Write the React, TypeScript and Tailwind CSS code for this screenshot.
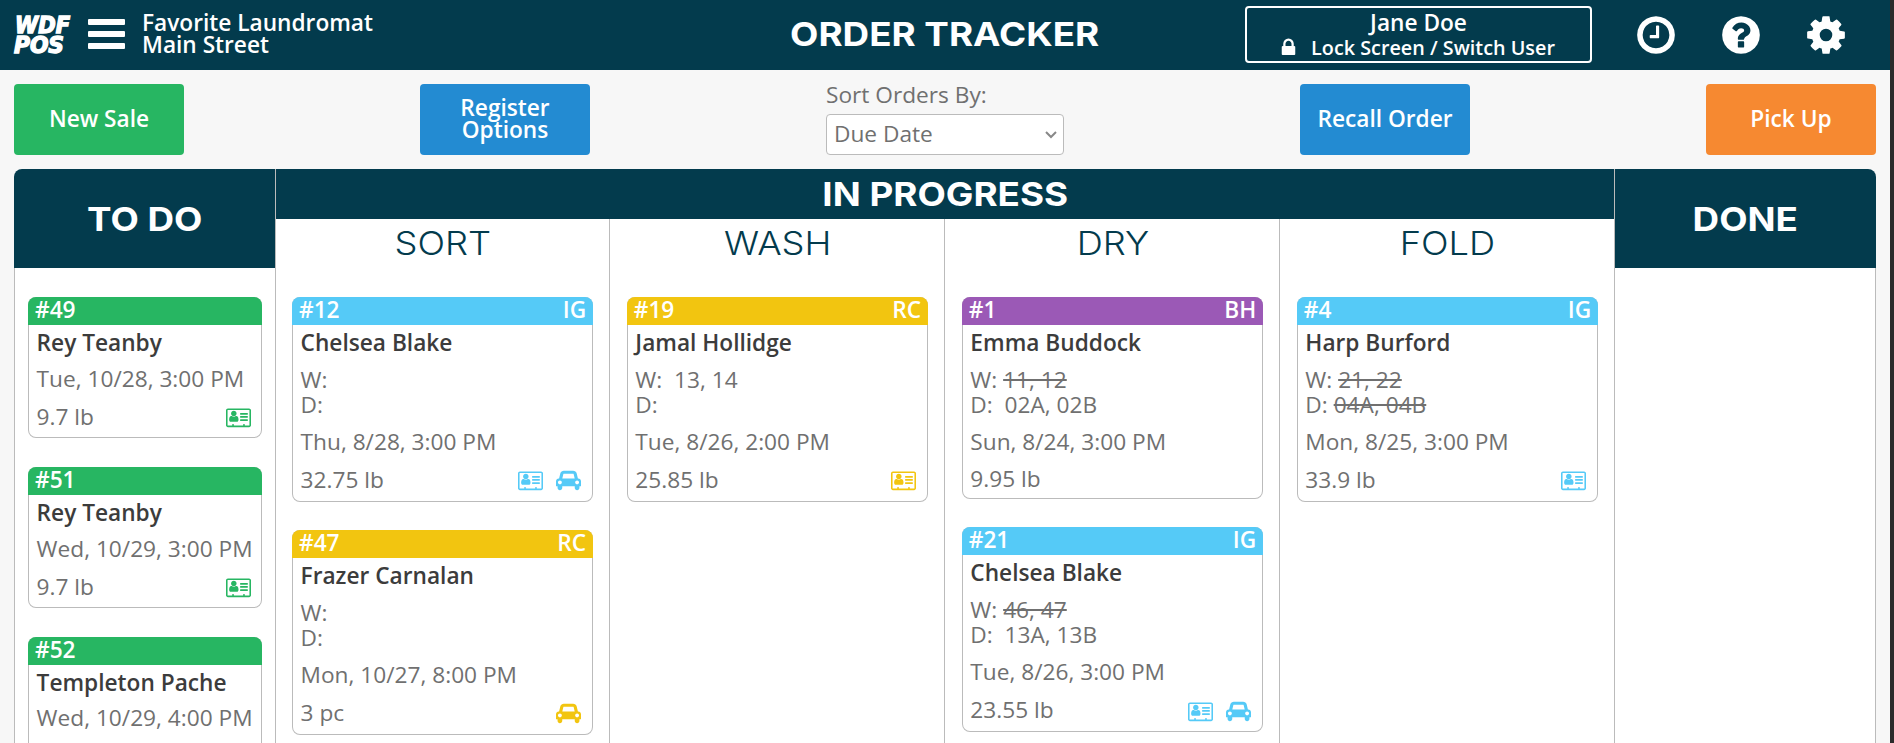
import type { ReactNode } from "react";

type Tone = "green" | "sky" | "yellow" | "purple";

type Order = {
  id: number;
  name: string;
  tone: Tone;
  initials?: string;
  machines?: boolean;
  washers?: string;
  washed?: boolean;
  dryers?: string;
  dried?: boolean;
  due: string;
  amount?: string;
  contact?: boolean;
  delivery?: boolean;
};

const headerTone: Record<Tone, string> = {
  green: "bg-[#27b662]",
  sky: "bg-[#55caf7]",
  yellow: "bg-[#f2c510]",
  purple: "bg-[#9b59b6]",
};

const iconTone: Record<Tone, string> = {
  green: "text-[#27b662]",
  sky: "text-[#55caf7]",
  yellow: "text-[#f2c510]",
  purple: "text-[#9b59b6]",
};

const todo: Order[] = [
  { id: 49, name: "Rey Teanby", tone: "green", due: "Tue, 10/28, 3:00 PM", amount: "9.7 lb", contact: true },
  { id: 51, name: "Rey Teanby", tone: "green", due: "Wed, 10/29, 3:00 PM", amount: "9.7 lb", contact: true },
  { id: 52, name: "Templeton Pache", tone: "green", due: "Wed, 10/29, 4:00 PM" },
];

const stages: { title: string; orders: Order[] }[] = [
  {
    title: "SORT",
    orders: [
      { id: 12, name: "Chelsea Blake", tone: "sky", initials: "IG", machines: true, due: "Thu, 8/28, 3:00 PM", amount: "32.75 lb", contact: true, delivery: true },
      { id: 47, name: "Frazer Carnalan", tone: "yellow", initials: "RC", machines: true, due: "Mon, 10/27, 8:00 PM", amount: "3 pc", delivery: true },
    ],
  },
  {
    title: "WASH",
    orders: [
      { id: 19, name: "Jamal Hollidge", tone: "yellow", initials: "RC", machines: true, washers: "13, 14", due: "Tue, 8/26, 2:00 PM", amount: "25.85 lb", contact: true },
    ],
  },
  {
    title: "DRY",
    orders: [
      { id: 1, name: "Emma Buddock", tone: "purple", initials: "BH", machines: true, washers: "11, 12", washed: true, dryers: "02A, 02B", due: "Sun, 8/24, 3:00 PM", amount: "9.95 lb" },
      { id: 21, name: "Chelsea Blake", tone: "sky", initials: "IG", machines: true, washers: "46, 47", washed: true, dryers: "13A, 13B", due: "Tue, 8/26, 3:00 PM", amount: "23.55 lb", contact: true, delivery: true },
    ],
  },
  {
    title: "FOLD",
    orders: [
      { id: 4, name: "Harp Burford", tone: "sky", initials: "IG", machines: true, washers: "21, 22", washed: true, dryers: "04A, 04B", dried: true, due: "Mon, 8/25, 3:00 PM", amount: "33.9 lb", contact: true },
    ],
  },
];

function Icon({ d, wide, className }: { d: string; wide?: boolean; className: string }) {
  return (
    <svg viewBox={wide ? "0 0 2048 1792" : "0 0 1792 1792"} fill="currentColor" className={className} aria-hidden="true">
      <path d={d} />
    </svg>
  );
}

const clockPath =
  "M1024 544v448q0 14-9 23t-23 9h-320q-14 0-23-9t-9-23v-64q0-14 9-23t23-9h224v-352q0-14 9-23t23-9h64q14 0 23 9t9 23zm416 352q0-148-73-273t-198-198-273-73-273 73-198 198-73 273 73 273 198 198 273 73 273-73 198-198 73-273zm224 0q0 209-103 385.5t-279.5 279.5-385.5 103-385.5-103-279.5-279.5-103-385.5 103-385.5 279.5-279.5 385.5-103 385.5 103 279.5 279.5 103 385.5z";
const helpPath =
  "M1024 1376v-192q0-14-9-23t-23-9h-192q-14 0-23 9t-9 23v192q0 14 9 23t23 9h192q14 0 23-9t9-23zm256-672q0-88-55.5-163t-138.5-116-170-41q-243 0-371 213-15 24 8 42l132 100q7 6 19 6 16 0 25-12 53-68 86-92 34-24 86-24 48 0 85.5 26t37.5 59q0 38-20 61t-68 45q-63 28-115.5 86.5t-52.5 125.5v36q0 14 9 23t23 9h192q14 0 23-9t9-23q0-19 21.5-49.5t54.5-49.5q32-18 49-28.5t46-35 44.5-48 28-60.5 12.5-81zm384 192q0 209-103 385.5t-279.5 279.5-385.5 103-385.5-103-279.5-279.5-103-385.5 103-385.5 279.5-279.5 385.5-103 385.5 103 279.5 279.5 103 385.5z";
const cogPath =
  "M1152 896q0-106-75-181t-181-75-181 75-75 181 75 181 181 75 181-75 75-181zm512-109v222q0 12-8 23t-20 13l-185 28q-19 54-39 91 35 50 107 138 10 12 10 25t-9 23q-27 37-99 108t-94 71q-12 0-26-9l-138-108q-44 23-91 38-16 136-29 186-7 28-36 28h-222q-14 0-24.5-8.5t-11.5-21.5l-28-184q-49-16-90-37l-141 107q-10 9-25 9-14 0-25-11-126-114-165-168-7-10-7-23 0-12 8-23 15-21 51-66.5t54-70.5q-27-50-41-99l-183-27q-13-2-21-12.5t-8-23.5v-222q0-12 8-23t19-13l186-28q14-46 39-92-40-57-107-138-10-12-10-24 0-10 9-23 26-36 98.5-107.5t94.5-71.5q13 0 26 10l138 107q44-23 91-38 16-136 29-186 7-28 36-28h222q14 0 24.5 8.5t11.5 21.5l28 184q49 16 90 37l142-107q9-9 24-9 13 0 25 10 129 119 165 170 7 8 7 22 0 12-8 23-15 21-51 66.5t-54 70.5q26 50 41 98l183 28q13 2 21 12.5t8 23.5z";
const lockPath =
  "M640 768h512v-192q0-106-75-181t-181-75-181 75-75 181v192zm832 96v576q0 40-28 68t-68 28h-960q-40 0-68-28t-28-68v-576q0-40 28-68t68-28h32v-192q0-184 132-316t316-132 316 132 132 316v192h32q40 0 68 28t28 68z";
const carPath =
  "M480 1088q0-66-47-113t-113-47-113 47-47 113 47 113 113 47 113-47 47-113zm36-320h1016l-89-357q-2-8-14-17.5t-21-9.5h-768q-9 0-21 9.5t-14 17.5zm1372 320q0-66-47-113t-113-47-113 47-47 113 47 113 113 47 113-47 47-113zm160-96v384q0 14-9 23t-23 9h-96v128q0 80-56 136t-136 56-136-56-56-136v-128h-1024v128q0 80-56 136t-136 56-136-56-56-136v-128h-96q-14 0-23-9t-9-23v-384q0-93 65.5-158.5t158.5-65.5h28l105-419q23-94 104-157.5t179-63.5h768q98 0 179 63.5t104 157.5l105 419h28q93 0 158.5 65.5t65.5 158.5z";
const cardPath =
  "M1024 1131q0 64-37 106.5t-91 42.5h-512q-54 0-91-42.5t-37-106.5 9-117.5 29.5-103 60.5-78 97-28.5q6 4 30 18t37.5 21.5 35.5 17.5 43 14.5 42 4.5 42-4.5 43-14.5 35.5-17.5 37.5-21.5 30-18q57 0 97 28.5t60.5 78 29.5 103 9 117.5zm-157-520q0 94-66.5 160.5t-160.5 66.5-160.5-66.5-66.5-160.5 66.5-160.5 160.5-66.5 160.5 66.5 66.5 160.5zm925 509v64q0 14-9 23t-23 9h-576q-14 0-23-9t-9-23v-64q0-14 9-23t23-9h576q14 0 23 9t9 23zm0-260v56q0 15-10.5 25.5t-25.5 10.5h-568q-15 0-25.5-10.5t-10.5-25.5v-56q0-15 10.5-25.5t25.5-10.5h568q15 0 25.5 10.5t10.5 25.5zm0-252v64q0 14-9 23t-23 9h-576q-14 0-23-9t-9-23v-64q0-14 9-23t23-9h576q14 0 23 9t9 23zm128 960v-1216q0-13-9.5-22.5t-22.5-9.5h-1728q-13 0-22.5 9.5t-9.5 22.5v1216q0 13 9.5 22.5t22.5 9.5h352v-96q0-14 9-23t23-9h64q14 0 23 9t9 23v96h768v-96q0-14 9-23t23-9h64q14 0 23 9t9 23v96h352q13 0 22.5-9.5t9.5-22.5zm128-1216v1216q0 66-47 113t-113 47h-1728q-66 0-113-47t-47-113v-1216q0-66 47-113t113-47h1728q66 0 113 47t47 113z";

function Logo() {
  return (
    <svg viewBox="0 0 58 38" className="h-[38px] w-[58px] overflow-visible" fill="#fff" stroke="#fff" strokeWidth="1.3">
      <g fontFamily="'DejaVu Sans Condensed', 'DejaVu Sans', sans-serif" fontWeight="700" fontStyle="italic" fontSize="22.5">
        <text x="1" y="17" textLength="55" lengthAdjust="spacingAndGlyphs">WDF</text>
        <text x="0" y="37" textLength="50" lengthAdjust="spacingAndGlyphs">POS</text>
      </g>
    </svg>
  );
}

function Heading({ className, children }: { className: string; children: ReactNode }) {
  return (
    <h2 className={`flex shrink-0 items-center justify-center bg-[#033b4d] pt-[2px] font-['Inter',sans-serif] text-[33px] font-bold text-white ${className}`}>
      <span className="scale-x-[1.115]">{children}</span>
    </h2>
  );
}

function Machines({ label, value, done }: { label: string; value?: string; done?: boolean }) {
  return (
    <div className="h-[25.3px] whitespace-pre leading-[25.3px]">
      {label}: {done ? <span className="line-through">{value}</span> : value && ` ${value}`}
    </div>
  );
}

function OrderCard({ order }: { order: Order }) {
  const hasIcons = order.contact || order.delivery;
  return (
    <div className="shrink-0 overflow-hidden rounded-lg bg-[#bbb] p-px pt-0">
      <div className={`-mx-px flex h-7 justify-between px-[7px] text-white font-semibold leading-[25px] ${headerTone[order.tone]}`}>
        <span>#{order.id}</span>
        <span>{order.initials}</span>
      </div>
      <div className="rounded-b-[7px] bg-white pt-[5px] pb-[7.4px] pl-[7.6px] text-[#707070] leading-[25px]">
        <div className="font-semibold text-[#3c3c3c]">{order.name}</div>
        {order.machines && (
          <div className="mt-[11.6px] mb-[11.8px]">
            <Machines label="W" value={order.washers} done={order.washed} />
            <Machines label="D" value={order.dryers} done={order.dried} />
          </div>
        )}
        <div className={order.machines ? "whitespace-nowrap" : "mt-[10.8px] whitespace-nowrap"}>{order.due}</div>
        <div className={`mt-[11.7px] flex items-center justify-between ${order.machines ? "pr-[11px]" : "pr-[10px]"} ${hasIcons ? "h-[27.5px]" : "h-[25px]"}`}>
          <span>{order.amount}</span>
          {hasIcons && (
            <span className={`flex items-center gap-[13px] pt-[2px] ${iconTone[order.tone]}`}>
              {order.contact && <Icon d={cardPath} wide className="h-[22px] w-[25px]" />}
              {order.delivery && <Icon d={carPath} wide className="h-[22px] w-[25px]" />}
            </span>
          )}
        </div>
      </div>
    </div>
  );
}

function ActionButton({ className, children }: { className: string; children: ReactNode }) {
  return (
    <button className={`flex h-[71px] w-[170px] items-center justify-center rounded pb-[2px] text-center font-semibold leading-[22px] text-white ${className}`}>
      {children}
    </button>
  );
}

export default function App() {
  return (
    <div className="h-[743px] w-full overflow-hidden bg-[#2b2b2b] pr-1 font-['Open_Sans',sans-serif] text-[22.68px]">
      <div className="flex h-full flex-col bg-[#f7f7f7]">
        <header className="grid h-[70px] shrink-0 grid-cols-[1fr_auto_1fr] items-center bg-[#033b4d] text-white">
          <div className="flex items-center pl-[14px]">
            <Logo />
            <div className="ml-[16px] flex w-[37px] flex-col gap-[6px] pb-[2px]">
              <div className="h-[6px] rounded-[1px] bg-white" />
              <div className="h-[6px] rounded-[1px] bg-white" />
              <div className="h-[6px] rounded-[1px] bg-white" />
            </div>
            <div className="ml-[17px] pb-[3px] font-semibold leading-[22px]">
              Favorite Laundromat
              <br />
              Main Street
            </div>
          </div>
          <h1 className="scale-x-[1.115] font-['Inter',sans-serif] text-[33px] font-bold">ORDER TRACKER</h1>
          <div className="flex items-center justify-end pr-[42px] pb-[1px]">
            <div className="mr-[42px] flex h-[57px] w-[347px] flex-col items-center justify-center rounded-[4px] border-2 border-white pb-[1px] font-semibold">
              <div className="leading-[26px]">Jane Doe</div>
              <div className="flex items-center pr-[4px] text-[19.8px] leading-[23px]">
                <Icon d={lockPath} className="mr-[12px] h-[21px] w-[21px]" />
                Lock Screen / Switch User
              </div>
            </div>
            <div className="flex gap-[41px]">
              <Icon d={clockPath} className="size-[44px]" />
              <Icon d={helpPath} className="size-[44px]" />
              <Icon d={cogPath} className="size-[44px]" />
            </div>
          </div>
        </header>

        <div className="flex h-[99px] shrink-0 items-center justify-between px-[14px]">
          <ActionButton className="bg-[#27b662]">New Sale</ActionButton>
          <ActionButton className="bg-[#238bd2]">
            Register
            <br />
            Options
          </ActionButton>
          <div className="flex h-[71px] w-[238px] flex-col justify-between text-[#707070]">
            <div className="leading-[21px]">Sort Orders By:</div>
            <div className="flex h-[41px] items-center justify-between rounded-[4px] border border-[#bbb] bg-white pr-[6px] pl-[7px]">
              <span>Due Date</span>
              <svg viewBox="0 0 12 8" className="h-2 w-3" fill="none" stroke="#888" strokeWidth="2">
                <path d="M1 1l5 5 5-5" />
              </svg>
            </div>
          </div>
          <ActionButton className="bg-[#238bd2]">Recall Order</ActionButton>
          <ActionButton className="bg-[#f68931]">Pick Up</ActionButton>
        </div>

        <main className="mx-[14px] grid min-h-0 flex-1 grid-cols-[261px_1340px_1fr] overflow-hidden rounded-t-lg bg-white">
          <section className="flex min-h-0 min-w-0 flex-col">
            <Heading className="h-[99px]">TO DO</Heading>
            <div className="flex min-h-0 flex-1 flex-col gap-[28.4px] border-l border-[#bbb] px-[13px] pt-[29px]">
              {todo.map((order) => (
                <OrderCard key={order.id} order={order} />
              ))}
            </div>
          </section>

          <section className="flex min-h-0 min-w-0 flex-col">
            <Heading className="h-[50px] border-x border-[#bbb]">IN PROGRESS</Heading>
            <div className="grid min-h-0 flex-1 grid-cols-4">
              {stages.map((stage) => (
                <div key={stage.title} className="flex min-h-0 min-w-0 flex-col border-r border-[#bbb] pr-[15.8px] pl-[16.75px] first:border-l first:pl-[16px]">
                  <h3 className="mb-[28px] flex h-[50px] shrink-0 items-center justify-center font-['Inter',sans-serif] text-[33px] font-light text-[#033b4d]">
                    <span className="scale-x-110">{stage.title}</span>
                  </h3>
                  <div className="flex flex-col gap-[28.4px]">
                    {stage.orders.map((order) => (
                      <OrderCard key={order.id} order={order} />
                    ))}
                  </div>
                </div>
              ))}
            </div>
          </section>

          <section className="flex min-w-0 flex-col">
            <Heading className="h-[99px]">DONE</Heading>
            <div className="flex-1 border-r border-[#bbb]" />
          </section>
        </main>
      </div>
    </div>
  );
}
